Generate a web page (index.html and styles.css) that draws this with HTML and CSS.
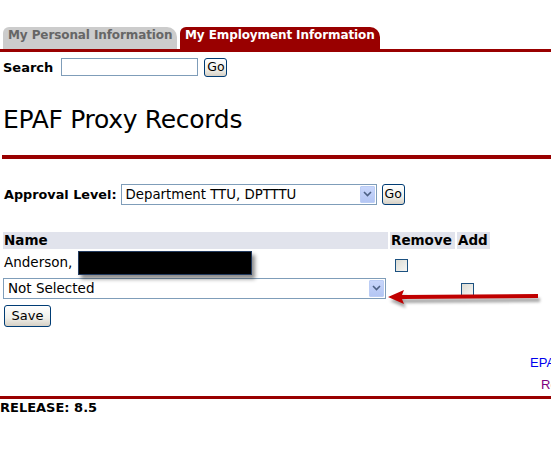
FILE: index.html
```html
<!DOCTYPE html>
<html>
<head>
<meta charset="utf-8">
<link rel="stylesheet" href="styles.css">
</head>
<body>
<div class="tabs">
  <div class="tab tab-off">My Personal Information</div>
  <div class="tab tab-on">My Employment Information</div>
</div>
<div class="search">
  <label class="lbl">Search</label>
  <input class="txt" type="text">
  <button class="btn">Go</button>
</div>
<h1 class="title">EPAF Proxy Records</h1>
<div class="rule"></div>
<div class="approval">
  <label class="lbl">Approval Level:</label>
  <div class="sel sel-approval"><span class="sel-text">Department TTU, DPTTTU</span><span class="sel-btn"><svg width="9" height="6" viewBox="0 0 9 6"><path d="M1 1 L4.5 4.5 L8 1" fill="none" stroke="#4d6185" stroke-width="1.6"/></svg></span></div>
  <button class="btn">Go</button>
</div>
<table class="grid">
  <tr class="head"><th class="c-name">Name</th><th class="c-rem">Remove</th><th class="c-add">Add</th></tr>
  <tr class="row1"><td class="c-name">Anderson, <span class="redact"></span></td><td class="c-rem"><span class="chk"></span></td><td></td></tr>
  <tr class="row2"><td class="c-name"><div class="sel sel-wide"><span class="sel-text">Not Selected</span><span class="sel-btn"><svg width="9" height="6" viewBox="0 0 9 6"><path d="M1 1 L4.5 4.5 L8 1" fill="none" stroke="#4d6185" stroke-width="1.6"/></svg></span></div></td><td></td><td class="c-add"><span class="chk"></span></td></tr>
</table>
<div class="save"><button class="btn btn-save">Save</button></div>
<div class="links">
  <div class="lnk lnk1">EPAF Menu</div>
  <div class="lnk lnk2">Return to Menu</div>
</div>
<div class="rule rule-foot"></div>
<div class="release">RELEASE: 8.5</div>
<svg class="arrow" width="170" height="30" viewBox="0 0 170 30">
  <defs><filter id="sh" x="-10%" y="-50%" width="120%" height="200%"><feGaussianBlur stdDeviation="1.5"/></filter></defs>
  <g transform="translate(2,4)" opacity="0.35" filter="url(#sh)">
    <path d="M2 12 L18 5 L16 10 L152 9 L152 13 L16 14 L18 19 Z" fill="#000"/>
  </g>
  <path d="M2 12 L18 5 L16 10 L152 9 L152 13 L16 14 L18 19 Z" fill="#c00000"/>
</svg>
</body>
</html>
```
FILE: styles.css
```css
html, body {
  margin: 0;
  padding: 0;
  background: #fff;
  overflow: hidden;
}
body {
  font-family: "DejaVu Sans", Verdana, sans-serif;
  font-size: 13px;
  color: #000;
  position: relative;
  width: 551px;
  height: 461px;
}
.tabs {
  margin-top: 27px;
  padding-left: 3px;
  display: flex;
  gap: 3px;
  height: 22px;
  border-bottom: 3px solid #990000;
}
.tab {
  font-weight: bold;
  font-size: 12px;
  line-height: 17px;
  padding: 0 7px 0 5px;
  border-radius: 6px 10px 0 0;
  white-space: nowrap;
  letter-spacing: -0.1px;
}
.tab-off {
  background: #cccccc;
  color: #666666;
  width: 162px;
}
.tab-on {
  background: #990000;
  color: #fff;
  width: 188px;
}
.search {
  display: flex;
  align-items: center;
  margin-top: 6px;
  padding-left: 3px;
  height: 18px;
}
.lbl {
  font-weight: bold;
  font-size: 13px;
}
.search .txt {
  margin-left: 8px;
  width: 135px;
  height: 16px;
  border: 1px solid #7f9db9;
  padding: 0;
  box-sizing: content-box;
}
.btn {
  font-family: "DejaVu Sans", Verdana, sans-serif;
  font-size: 12.5px;
  height: 19px;
  padding: 0 2px;
  border: 1px solid #003c74;
  border-radius: 3px;
  background: linear-gradient(#ffffff, #f0f0ea 60%, #d6d0c5);
  color: #000;
  line-height: 16px;
}
.search .btn {
  margin-left: 6px;
  width: 23px;
  height: 19px;
}
.title {
  font-size: 25px;
  font-weight: normal;
  margin: 29px 0 0 3px;
  line-height: 30px;
  letter-spacing: -0.3px;
}
.rule {
  height: 4px;
  background: #990000;
  margin: 20px 0 0 2px;
}
.approval {
  display: flex;
  align-items: center;
  padding-left: 4px;
  margin-top: 24px;
  height: 22px;
}
.approval .lbl {
  font-size: 12.8px;
}
.sel {
  display: flex;
  align-items: center;
  border: 1px solid #7f9db9;
  height: 19px;
  background: #fff;
  box-sizing: content-box;
}
.sel-text {
  flex: 1;
  padding-left: 4px;
  font-size: 13.3px;
  white-space: nowrap;
}
.sel-btn {
  width: 15px;
  height: 17px;
  margin-right: 1px;
  background: linear-gradient(#c8d6fb, #b4c6f4);
  border: 1px solid #bccdf5;
  box-sizing: border-box;
  display: flex;
  align-items: center;
  justify-content: center;
  border-radius: 1px;
}
.sel-approval {
  margin-left: 4px;
  width: 254px;
}
.approval .btn {
  margin-left: 5px;
  width: 23px;
  height: 21px;
}
.grid {
  border-collapse: separate;
  border-spacing: 2px;
  margin-top: 25px;
  margin-left: 1px;
  font-size: 13.5px;
}
.grid th {
  background: #e1e3ec;
  text-align: left;
  font-weight: bold;
  padding: 0 1px;
  height: 17px;
  line-height: 17px;
}
.grid td {
  padding: 0;
  vertical-align: middle;
}
.c-name { width: 383px; }
.c-rem { width: 63px; }
.c-add { width: 31px; }
.row1 td {
  height: 23px;
}
.row1 .c-name {
  padding-left: 1px;
  white-space: nowrap;
}
.redact {
  display: inline-block;
  vertical-align: middle;
  width: 172px;
  height: 22px;
  background: #000;
  border: 1px solid #223a5e;
  box-shadow: 3px 4px 4px rgba(0,0,0,0.45);
  margin-left: 1px;
}
.chk {
  display: inline-block;
  width: 11px;
  height: 11px;
  border: 1px solid #1c5180;
  background: linear-gradient(135deg, #dcdcd4, #f6f6f4);
  vertical-align: middle;
}
.row1 .c-rem .chk {
  margin-left: 5px;
  margin-top: 4px;
}
.row2 td {
  height: 22px;
}
.row2 .c-add .chk {
  margin-left: 4px;
}
.row2 .sel-text {
  font-size: 13.5px;
}
.sel-wide {
  width: 381px;
}
.save {
  padding-left: 4px;
  margin-top: 4px;
}
.btn-save {
  height: 22px;
  width: 47px;
  font-size: 13px;
}
.links {
  margin-top: 28px;
  font-family: "Liberation Sans", Arial, sans-serif;
  font-size: 13px;
  white-space: nowrap;
}
.lnk1 {
  padding-left: 530px;
  color: #0000ee;
  height: 20px;
}
.lnk2 {
  padding-left: 541px;
  color: #800080;
  height: 19px;
  margin-top: 2px;
}
.rule-foot {
  height: 3px;
  margin: 0;
}
.release {
  font-weight: bold;
  font-size: 13px;
  padding-top: 1px;
}
.arrow {
  position: absolute;
  left: 386px;
  top: 285px;
}
```
